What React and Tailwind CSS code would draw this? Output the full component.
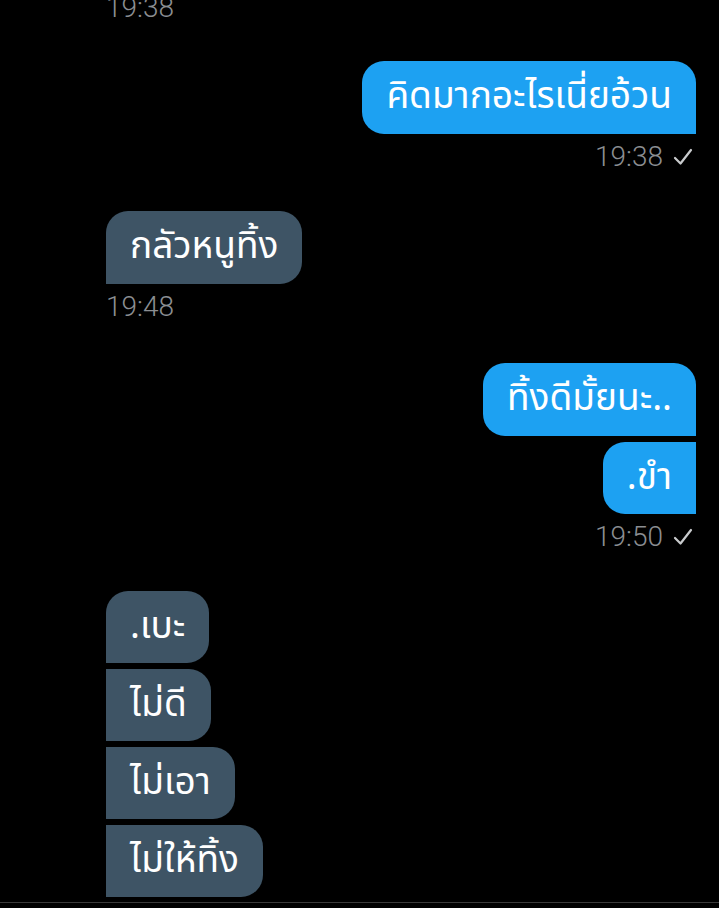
import React from 'react';

const Check = () => (
    <svg width="20" height="18" viewBox="0 0 20 18" fill="none" className="ml-[10px] mr-[3px]">
        <path d="M2 10 L7.5 15.5 L18 2" stroke="#c9cbcd" strokeWidth="2.2" strokeLinecap="round" strokeLinejoin="round" />
    </svg>
);

const Time = ({ children, sent, className = '' }) => (
    <div className={`flex items-center h-[30px] text-[28px] text-[#8b8e92] ${sent ? 'justify-end' : 'justify-start'} ${className}`} style={{ fontFamily: 'Roboto, "Liberation Sans", sans-serif', fontWeight: 300 }}>
        <span>{children}</span>
        {sent && <Check />}
    </div>
);

const Bubble = ({ children, sent, className = '' }) => (
    <div className={`flex ${sent ? 'justify-end' : 'justify-start'}`}>
        <div className={`h-[73px] flex items-center px-6 text-[37px] leading-none text-white ${sent ? 'bg-[#1da1f2]' : 'bg-[#3e5465]'} ${className}`}>
            {children}
        </div>
    </div>
);

export default function App() {
    return (
        <div className="min-h-[908px] bg-black overflow-hidden" style={{ fontFamily: '"Noto Sans Thai", "Noto Sans", sans-serif' }}>
            <div className="pl-[106px] pr-[23px]">
                <Time className="-mt-[7px]">19:38</Time>

                <div className="mt-[38px]">
                    <Bubble sent className="rounded-[22px] rounded-br-none">คิดมากอะไรเนี่ยอ้วน</Bubble>
                    <Time sent className="mt-2">19:38</Time>
                </div>

                <div className="mt-[39px]">
                    <Bubble className="rounded-[22px] rounded-bl-none">กลัวหนูทิ้ง</Bubble>
                    <Time className="mt-2">19:48</Time>
                </div>

                <div className="mt-[41px] flex flex-col gap-[6px]">
                    <Bubble sent className="rounded-[22px] rounded-br-none">ทิ้งดีมั้ยนะ..</Bubble>
                    <Bubble sent className="!h-[72px] rounded-[22px] rounded-r-none">.ขำ</Bubble>
                </div>
                <Time sent className="mt-2">19:50</Time>

                <div className="mt-[39px] flex flex-col gap-[6px]">
                    <Bubble className="!h-[72px] rounded-[22px] rounded-bl-none">.เบะ</Bubble>
                    <Bubble className="!h-[72px] rounded-[22px] rounded-l-none">ไม่ดี</Bubble>
                    <Bubble className="!h-[72px] rounded-[22px] rounded-l-none">ไม่เอา</Bubble>
                    <Bubble className="!h-[72px] rounded-[22px] rounded-l-none">ไม่ให้ทิ้ง</Bubble>
                </div>
            </div>
            <div className="mt-[5px] h-px bg-[#3a3a3a]" />
        </div>
    );
}
